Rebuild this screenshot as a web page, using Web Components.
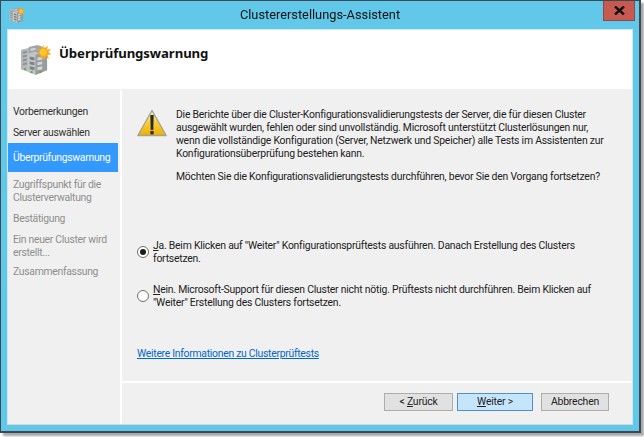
<!DOCTYPE html>
<html lang="de">
<head>
<meta charset="utf-8">
<title>Clustererstellungs-Assistent</title>
<style>
  html, body { margin: 0; padding: 0; background: #fff; }
  body { width: 644px; height: 437px; overflow: hidden; font-family: Roboto, "Noto Sans", sans-serif; }
</style>
</head>
<body>
<wizard-window caption="Clustererstellungs-Assistent">
  <wizard-header slot="header" heading="Überprüfungswarnung"></wizard-header>
  <wizard-steps slot="steps"></wizard-steps>
  <warning-page slot="page"></warning-page>
  <wizard-footer slot="footer"></wizard-footer>
</wizard-window>

<script>
const serverIcon = (size) => `
<svg width="${size}" height="${size}" viewBox="0 0 32 32" aria-hidden="true">
  <path d="M1 6l8-2 3 1v22l-3 2-8-3z" fill="#b4b8ba"/>
  <path d="M9 3l9-2 6 2v22l-15 1z" fill="#a2a6a8"/>
  <path d="M8 10l8-2 2 1v21l-2 2-8-3z" fill="#c2c5c6"/>
  <path d="M16 11l9-2 3 1v17l-12 5z" fill="#989c9e"/>
  <path d="M10 13l5 1v3l-5-1zM10 18l5 1v3l-5-1zM10 23l5 1v3l-5-1z" fill="#7d8284"/>
  <path d="M18 14l5-1v3l-5 1zM18 19l5-1v3l-5 1zM18 24l5-1v3l-5 1z" fill="#d5d7d8"/>
  <path d="M3 8l4-1v2l-4 1zM3 12l4-1v2l-4 1zM3 16l4-1v2l-4 1zM3 20l4-1v2l-4 1z" fill="#8a8f91"/>
  <path d="M11 5l5-1v2l-5 1z" fill="#d8dadb"/>
  <rect x="11" y="28" width="2" height="2" fill="#5fa83c"/>
  <rect x="20" y="28" width="2" height="2" fill="#5fa83c"/>
  <rect x="4" y="25" width="2" height="2" fill="#5fa83c"/>
  <path d="M24 0l1.500 4 3.200-2.200-.8 3.800 4.100-.3-2.700 3 3 2.300-3.900.8 1.400 3.800-3.500-2-1.300 3.800-1.500-3.800-3.500 2 1.400-3.800-3.900-.8 3-2.300-2.700-3 4.100.3-.8-3.800 3.200 2.200z" fill="#f7a81b"/>
  <circle cx="24" cy="8.500" r="3.600" fill="#fdc52e"/>
</svg>`;

class WizardWindow extends HTMLElement {
  constructor() {
    super();
    this.attachShadow({ mode: "open" });
  }
  connectedCallback() {
    this.shadowRoot.innerHTML = `
    <style>
      :host {
        display: block;
        box-sizing: border-box;
        width: 641px;
        height: 433px;
        background: #62c8ea;
        border: 1px solid #3b4a52;
        border-right-width: 2px;
        border-bottom-width: 2px;
        box-shadow: 3px 3px 2px #a8a8a8;
        filter: blur(.35px);
      }
      .bar { display: flex; height: 28px; position: relative; align-items: center; justify-content: center; }
      .caption { font-size: 12.8px; color: #111; margin-top: -1px; }
      .close {
        position: absolute; right: 4px; top: 0; width: 32px; height: 20px;
        background: #c75a50; border: 1px solid #8e4a48; border-top: 0; box-sizing: border-box;
        display: flex; align-items: center; justify-content: center;
      }
      .client {
        margin: 0 6px 0 6px;
        height: 396px;
        display: grid;
        grid-template-columns: 114px 1fr;
        grid-template-rows: 60px 1fr;
        background: #fff;
        border: 1px solid #cdeaf5;
        border-bottom-color: #d6d6d6;
        box-sizing: border-box;
      }
      .head { grid-column: 1 / 3; }
    </style>
    <div class="bar">
      <span id="appicon" style="position:absolute;left:8px;top:6px;line-height:0"></span>
      <span class="caption">${this.getAttribute("caption")}</span>
      <div class="close">
        <svg width="11" height="9" viewBox="0 0 11 9"><path d="M1 0.500l9 8M10 0.500l-9 8" stroke="#111" stroke-width="2.400" fill="none"/></svg>
      </div>
    </div>
    <div class="client">
      <div class="head"><slot name="header"></slot></div>
      <slot name="steps"></slot>
      <div style="display:flex;flex-direction:column;min-height:0">
        <slot name="page"></slot>
        <slot name="footer"></slot>
      </div>
    </div>`;
    this.shadowRoot.getElementById("appicon").innerHTML = serverIcon(16);
  }
}
customElements.define("wizard-window", WizardWindow);

class WizardHeader extends HTMLElement {
  constructor() {
    super();
    this.attachShadow({ mode: "open" });
  }
  connectedCallback() {
    this.shadowRoot.innerHTML = `
    <style>
      :host { display: flex; box-sizing: border-box; height: 60px; padding: 14px 0 0 12px; gap: 8px; border-bottom: 1px solid #f0f0f0; }
      h1 { margin: -1px 0 0; font: bold 13.2px/20px "Noto Sans", sans-serif; color: #111; letter-spacing: -.1px; }
    </style>
    ${serverIcon(31)}
    <h1>${this.getAttribute("heading")}</h1>`;
  }
}
customElements.define("wizard-header", WizardHeader);

class WizardSteps extends HTMLElement {
  constructor() {
    super();
    this.attachShadow({ mode: "open" });
  }
  connectedCallback() {
    this.shadowRoot.innerHTML = `
    <style>
      :host {
        display: block; box-sizing: border-box; width: 114px;
        background: #f0f0f0; border-right: 2px solid #fff;
        padding-top: 15px;
        font-size: 10.4px; line-height: 13px; color: #333; letter-spacing: -.3px;
      }
      div { padding: 0 0 8px 5px; }
      div.on { background: #3399ff; color: #fff; width: 105px; padding: 8px 0 8px 5px; height: 13px; margin: -4px 0 6px; }
      div.off { color: #8e8e8e; }
      div.tight { padding-bottom: 6px; }
    </style>
    <div>Vorbemerkungen</div>
    <div>Server auswählen</div>
    <div class="on">Überprüfungswarnung</div>
    <div class="off">Zugriffspunkt für die<br>Clusterverwaltung</div>
    <div class="off">Bestätigung</div>
    <div class="off tight">Ein neuer Cluster wird<br>erstellt...</div>
    <div class="off">Zusammenfassung</div>`;
  }
}
customElements.define("wizard-steps", WizardSteps);

class RadioOption extends HTMLElement {
  constructor() {
    super();
    this.attachShadow({ mode: "open" });
  }
  connectedCallback() {
    const on = this.hasAttribute("checked");
    this.shadowRoot.innerHTML = `
    <style>
      :host { display: flex; gap: 4px; align-items: flex-start; }
      .dot {
        flex: none; box-sizing: border-box; width: 12px; height: 12px; margin-top: 7px;
        border: 1px solid #6e6e6e; border-radius: 50%; background: #fff;
        display: flex; align-items: center; justify-content: center;
      }
      .dot i { width: 6px; height: 6px; border-radius: 50%; background: #1a1a1a; display: ${on ? "block" : "none"}; }
    </style>
    <span class="dot"><i></i></span>
    <span><slot></slot></span>`;
  }
}
customElements.define("radio-option", RadioOption);

class WarningPage extends HTMLElement {
  constructor() {
    super();
    this.attachShadow({ mode: "open" });
  }
  connectedCallback() {
    this.shadowRoot.innerHTML = `
    <style>
      :host {
        display: block; box-sizing: border-box; height: 291px; background: #f0f0f0;
        padding: 18px 0 0 15px;
        font-size: 10.4px; line-height: 13px; color: #222; letter-spacing: -.22px;
      }
      .top { display: flex; gap: 9px; }
      .top svg { flex: none; margin-top: 1px; }
      p { margin: 0; white-space: nowrap; }
      p + p { margin-top: 10px; }
      radio-option { white-space: nowrap; }
      u { text-underline-offset: 1px; }
      .one { margin-top: 56px; }
      .two { margin-top: 18px; }
      a { display: block; margin-top: 38px; color: #0066cc; text-decoration: underline; letter-spacing: -.28px; }
    </style>
    <div class="top">
      <svg width="30" height="28" viewBox="0 0 30 28" aria-hidden="true">
        <defs><linearGradient id="w" x1="0" y1="0" x2="0" y2="1"><stop offset="0" stop-color="#fdf4c4"/><stop offset=".45" stop-color="#f8d040"/><stop offset="1" stop-color="#eeb000"/></linearGradient></defs>
        <path d="M15 1.500L.8 26.500h28.400z" fill="url(#w)" stroke="#a3a294" stroke-width="1.300" stroke-linejoin="round"/>
        <path d="M13.300 6h3.400l-.4 15h-2.600z" fill="#2a2a2a"/>
        <rect x="13.400" y="22" width="3.200" height="3.400" fill="#2a2a2a"/>
      </svg>
      <div>
        <p>Die Berichte über die Cluster-Konfigurationsvalidierungstests der Server, die für diesen Cluster<br>
        ausgewählt wurden, fehlen oder sind unvollständig. Microsoft unterstützt Clusterlösungen nur,<br>
        wenn die vollständige Konfiguration (Server, Netzwerk und Speicher) alle Tests im Assistenten zur<br>
        Konfigurationsüberprüfung bestehen kann.</p>
        <p>Möchten Sie die Konfigurationsvalidierungstests durchführen, bevor Sie den Vorgang fortsetzen?</p>
      </div>
    </div>
    <radio-option class="one" checked><u>J</u>a. Beim Klicken auf "Weiter" Konfigurationsprüftests ausführen. Danach Erstellung des Clusters<br>fortsetzen.</radio-option>
    <radio-option class="two"><u>N</u>ein. Microsoft-Support für diesen Cluster nicht nötig. Prüftests nicht durchführen. Beim Klicken auf<br>"Weiter" Erstellung des Clusters fortsetzen.</radio-option>
    <a href="#">Weitere Informationen zu Clusterprüftests</a>`;
  }
}
customElements.define("warning-page", WarningPage);

class WizardFooter extends HTMLElement {
  constructor() {
    super();
    this.attachShadow({ mode: "open" });
  }
  connectedCallback() {
    this.shadowRoot.innerHTML = `
    <style>
      :host {
        display: flex; box-sizing: border-box; flex: 1; background: #f0f0f0;
        border-top: 2px solid #fff; padding: 10px 23px 0 0;
        justify-content: flex-end; gap: 8px;
        font-size: 10.4px; color: #222; letter-spacing: -.2px;
      }
      button {
        box-sizing: border-box; width: 68px; height: 18px; padding: 0;
        font: inherit; letter-spacing: inherit; color: inherit; line-height: 14px;
        background: #e1e1e1; border: 1px solid #adadad;
      }
      button.back { width: 69px; margin-right: -4px; }
      button.main { width: 76px; background: #c4e5fc; border-color: #4d93c4; }
    </style>
    <button class="back">&lt; <u>Z</u>urück</button>
    <button class="main"><u>W</u>eiter &gt;</button>
    <button>Abbrechen</button>`;
  }
}
customElements.define("wizard-footer", WizardFooter);
</script>
</body>
</html>
